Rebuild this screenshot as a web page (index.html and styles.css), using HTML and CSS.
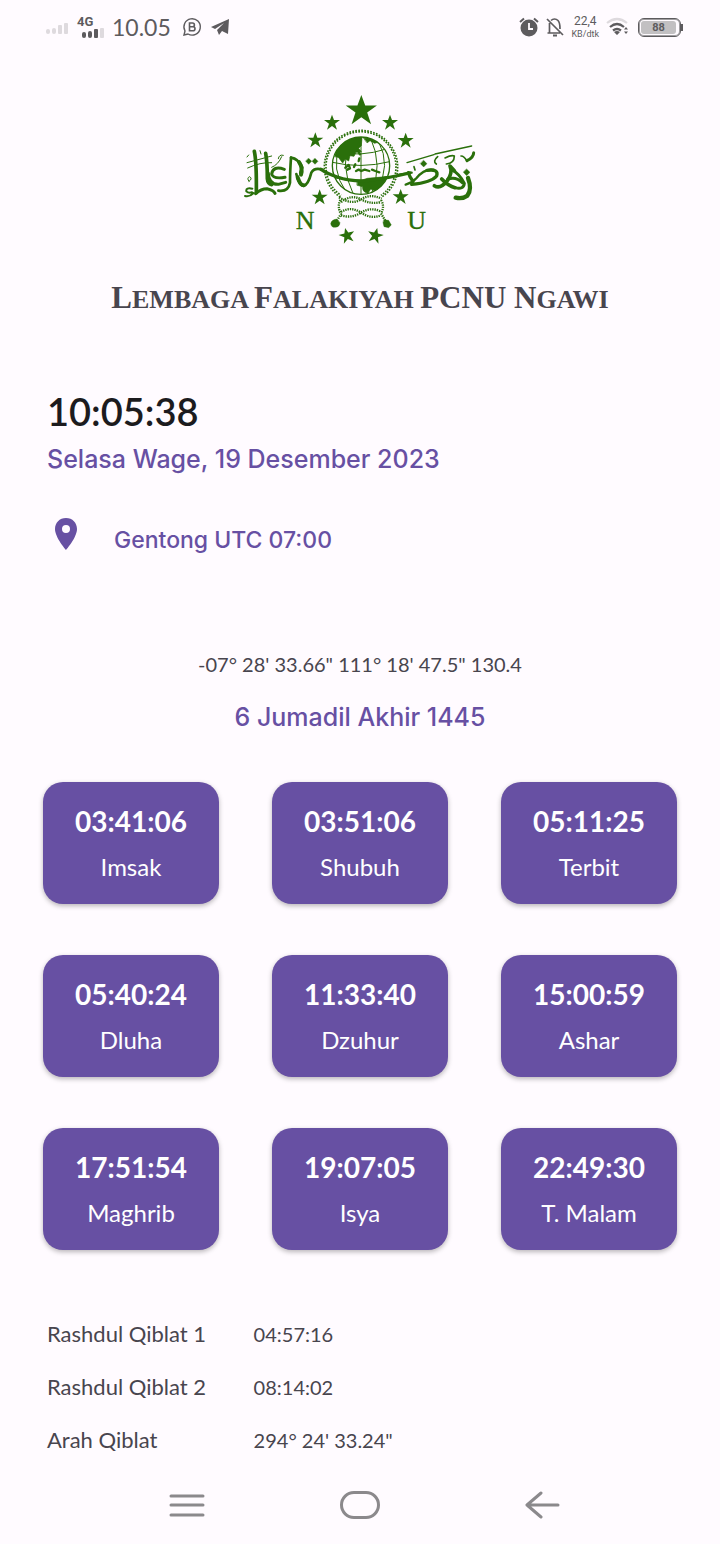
FILE: index.html
```html
<!DOCTYPE html>
<html lang="id">
<head>
<meta charset="utf-8">
<meta name="viewport" content="width=device-width, initial-scale=1">
<title>Lembaga Falakiyah PCNU Ngawi</title>
<link rel="stylesheet" href="styles.css">
</head>
<body>
<div class="screen">
  <header class="status">
    <div class="status-left">
      <svg class="signal" width="24" height="12" viewBox="0 0 24 12" fill="#dedade"><rect x="0" y="6" width="4" height="5" rx="2"/><rect x="6" y="5" width="4" height="6" rx="2"/><rect x="12" y="2" width="4" height="9" rx="1"/><rect x="18" y="0" width="4" height="11" rx="1"/></svg>
      <span class="network">
        <span class="network-type">4G</span>
        <svg width="23" height="10" viewBox="0 0 23 10" fill="#5d5b5e"><rect x="0" y="4" width="4" height="6" rx="2"/><rect x="6" y="3" width="4" height="7" rx="2"/><rect x="12" y="1" width="4" height="9" rx="1"/><rect x="18" y="0" width="4" height="10" rx="1" fill="#dedade"/></svg>
      </span>
      <span class="status-time">10.05</span>
      <svg class="wa" width="20" height="20" viewBox="0 0 20 20" fill="none" stroke="#5d5b5e"><path d="M2 18 3 14A8.200 8.200 0 1 1 6 17z" stroke-width="1.400"/><path d="M7.500 6h3a1.900 1.900 0 0 1 0 3.800h-3zM7.500 9.800h3.500a2 2 0 0 1 0 4h-3.500z" stroke-width="1.600"/></svg>
      <svg width="19" height="17" viewBox="0 0 19 17" fill="#5d5b5e"><path d="M0 8 18 0 17 15 11 12 8 16 6 11 13 4 4 10z"/></svg>
    </div>
    <div class="status-right">
      <svg width="20" height="20" viewBox="0 0 20 20"><circle cx="10" cy="11" r="8.500" fill="#5d5b5e"/><path d="M1 5 5 1.500M19 5 15 1.500" stroke="#5d5b5e" stroke-width="2"/><path d="M10 6v6h4" fill="none" stroke="#fffbff" stroke-width="1.800"/></svg>
      <svg width="18" height="20" viewBox="0 0 18 20" fill="none" stroke="#5d5b5e" stroke-width="1.700"><path d="M1 2 17 18M5 3.500C7 1.500 10 1.500 12 3.500S14 8 14 12M3.500 6v10H14M1.500 16H14"/><path d="M7 18.500h4" stroke-width="2"/></svg>
      <span class="speed"><span>22,4</span><span class="unit">KB/dtk</span></span>
      <svg width="23" height="20" viewBox="0 0 23 20" fill="none" stroke="#5d5b5e" stroke-width="2.200"><path d="M1 6Q11 -2 21 6" stroke="#dedade"/><path d="M4 10Q11 4 18 10M7 13.500Q11 10.500 15 13.500"/><path d="m8 15 3 3 3-3q-3-2-6 0zM18 12.500l2-2.500 2 2.500zM18 14.500l2 2.500 2-2.500z" fill="#5d5b5e" stroke="none"/></svg>
      <span class="battery"><span class="charge">88</span></span>
    </div>
  </header>

  <main class="content">
    <svg class="logo" width="232" height="152" viewBox="30 24 696 456" fill="none" stroke="#2a6f0b" stroke-linecap="round" stroke-linejoin="round" role="img" aria-label="Logo Nahdlatul Ulama">
      <defs>
        <path id="star" d="M0-24 6-8 24-8 9 3 15 21 0 10-15 21-9 3-24-8-6-8z" stroke="none" fill="#2a6f0b"/>
        <clipPath id="globe"><circle cx="381" cy="242" r="86"/></clipPath>
      </defs>
      <use href="#star" transform="translate(382 77) scale(1.950)"/>
      <use href="#star" x="294" y="113"/><use href="#star" x="468" y="113"/>
      <use href="#star" x="244" y="166"/><use href="#star" x="515" y="167"/>
      <use href="#star" x="257" y="337"/><use href="#star" x="500" y="336"/>
      <use href="#star" transform="translate(339 452) rotate(-14)"/><use href="#star" transform="translate(424 452) rotate(14)"/>
      <!-- rope ring -->
      <g stroke-linecap="butt">
        <path d="M319 336Q306 328 296 316A110 110 0 1 1 466 316Q456 328 443 336" stroke-width="5" stroke-dasharray="5 4"/>
        <path d="M321 331Q308 322 300 312A105 105 0 1 1 462 312Q454 322 441 331" stroke-width="5" stroke-dasharray="5 4" stroke-dashoffset="4"/>
      </g>
      <!-- knot and tassels -->
      <g transform="translate(255 315)" stroke-width="7" stroke-linecap="butt" stroke-dasharray="4 3">
        <path d="M60 22Q98 46 126 28T188 26M66 36Q98 12 126 28T186 36M66 66Q96 48 126 68T186 76M66 76Q98 86 126 68T184 64"/>
        <path d="M64 30Q54 50 66 72L52 95M186 30Q198 50 186 70L200 94"/>
      </g>
      <path d="M308 402q-16 2-18 14 2 12 14 11 14-2 14-14zM450 404l14 2 8 14-8 8-14-3-3-12z" fill="#2a6f0b"/>
      <!-- globe -->
      <circle cx="381" cy="242" r="86" stroke-width="4"/>
      <g clip-path="url(#globe)">
        <path d="M295 232q86 20 172-2M307 200q70 18 150-8M300 278q82 22 164-4M381 156v172M350 158q-36 80 8 170M410 160q38 80 2 168M434 170q38 72-4 144M318 184q-30 68 18 136" stroke-width="3"/>
        <path d="M302 214q8-48 78-60l4 4-2 24-8 8 8 10-16 2-6 12-12-2-4 16-10-6-8 12-12-16zM370 290l30-10 68-6q-5 30-36 48l-22-10-8 13q-18-4-16-20l-16-4zM390 160l24-2 20 13-12 4-14-8-8 6z" fill="#2a6f0b" stroke-width="2"/>
        <path d="M334 248l10-8 4 10-8 4M364 238l-4 8M374 228l2-8M366 258l8-4 8 4 10-4 14 4M374 202l4 6M414 254l10 4 12 4" stroke-width="7"/>
      </g>
      <!-- calligraphic band -->
      <path d="M261 253Q280 266 310 276 350 290 400 287 460 280 527 264" stroke-width="10"/>
      <!-- left calligraphy -->
      <g transform="translate(21 171)">
        <path d="M40 28Q47 60 46 152M74 34Q79 60 79 110 80 125 92 128" stroke-width="11"/>
        <path d="M44 155Q60 140 78 140 98 144 102 154M130 82Q96 70 92 96 96 112 132 106M82 94Q84 128 112 127L134 121" stroke-width="9"/>
        <path d="M150 47Q147 90 147 122 142 150 112 146" stroke-width="8"/>
        <path d="M150 47Q172 50 184 76 174 98 180 92M166 96Q174 132 188 132 202 128 211 92 220 76 244 83" stroke-width="8"/>
        <path d="M174 60Q186 78 180 98M170 106Q178 130 188 130" stroke-width="12"/>
        <path d="M18 62 92 42M20 78Q58 60 92 62M92 76Q112 68 122 44M112 50q2-14 15-10M18 45l5-6M57 26l3 10M24 118q-8-10 2-14 10 6-2 14" stroke-width="3"/>
        <path d="M34 140q-20-4-18 8 6 6 17 3M12 162q13 4 26-9" stroke-width="6"/>
        <path d="m203 49 9 9-9 9-9-9zM222 49l9 9-9 9-9-9z" fill="#2a6f0b" stroke-width="1"/>
      </g>
      <!-- right calligraphy -->
      <g transform="translate(495 165)">
        <path d="M0 104 38 98M20 134Q40 128 52 115 76 85 104 90" stroke-width="7"/>
        <path d="M84 91Q120 86 113 108 96 128 38 133M28 98Q32 112 42 124" stroke-width="10"/>
        <path d="M106 137Q124 149 145 122 162 98 153 78L166 92M128 117Q148 138 168 143" stroke-width="11"/>
        <path d="M160 90Q182 102 196 130 194 150 168 143M146 118Q170 108 190 128" stroke-width="9"/>
        <path d="M207 114Q220 148 205 167 190 178 170 173" stroke-width="13"/>
        <path d="M24 68 105 44M108 42 218 18" stroke-width="4"/>
        <path d="M112 72q-12-8 4-22M138 54q20-10 28-6 0 22-24 24M186 48q10 0 18 16M48 90l-3-10" stroke-width="5"/>
        <path d="M204 62q20-10 20-24" stroke-width="9"/>
        <path d="m74 61 10 10-10 10-10-10zM203 87l10 10-10 10-10-10z" fill="#2a6f0b" stroke-width="1"/>
      </g>
      <text class="logo-letter" x="185" y="432">N</text>
      <text class="logo-letter" x="520" y="432">U</text>
    </svg>

    <h1 class="title"><span class="cap">L</span>embaga <span class="cap">F</span>alakiyah <span class="cap">PCNU N</span>gawi</h1>

    <section class="now">
      <time class="clock">10:05:38</time>
      <p class="date">Selasa Wage, 19 Desember 2023</p>
      <p class="place">
        <svg width="24" height="34" viewBox="0 0 24 34"><path d="M12 1C5.500 1 1 5.800 1 12c0 8.500 11 21 11 21s11-12.500 11-21C23 5.800 18.500 1 12 1zm0 7a4 4 0 1 1 0 8 4 4 0 0 1 0-8z" fill="#6750a3" fill-rule="evenodd"/></svg>
        <span class="place-name">Gentong UTC 07:00</span>
      </p>
    </section>

    <section class="position">
      <p class="coords">-07° 28' 33.66" 111° 18' 47.5" 130.4</p>
      <p class="hijri">6 Jumadil Akhir 1445</p>
    </section>

    <section class="times">
      <article class="card"><time class="card-time">03:41:06</time><span>Imsak</span></article>
      <article class="card"><time class="card-time">03:51:06</time><span>Shubuh</span></article>
      <article class="card"><time class="card-time">05:11:25</time><span>Terbit</span></article>
      <article class="card"><time class="card-time">05:40:24</time><span>Dluha</span></article>
      <article class="card"><time class="card-time">11:33:40</time><span>Dzuhur</span></article>
      <article class="card"><time class="card-time">15:00:59</time><span>Ashar</span></article>
      <article class="card"><time class="card-time">17:51:54</time><span>Maghrib</span></article>
      <article class="card"><time class="card-time">19:07:05</time><span>Isya</span></article>
      <article class="card"><time class="card-time">22:49:30</time><span>T. Malam</span></article>
    </section>

    <table class="qibla">
      <tr><th scope="row">Rashdul Qiblat 1</th><td>04:57:16</td></tr>
      <tr><th scope="row">Rashdul Qiblat 2</th><td>08:14:02</td></tr>
      <tr><th scope="row">Arah Qiblat</th><td>294° 24' 33.24"</td></tr>
    </table>
  </main>

  <nav class="navbar">
    <button class="nav-button" aria-label="Menu"><svg width="36" height="28" viewBox="0 0 36 28"><path d="M2 5h32M2 14h32M2 24h32"/></svg></button>
    <button class="nav-button home" aria-label="Beranda"><svg width="42" height="30" viewBox="0 0 42 30"><rect x="2.500" y="2.500" width="37" height="25" rx="12.500"/></svg></button>
    <button class="nav-button" aria-label="Kembali"><svg width="36" height="28" viewBox="0 0 36 28"><path d="M34 14H3M17 2 3 14l14 12"/></svg></button>
  </nav>
</div>
</body>
</html>
```
FILE: styles.css
```css
* { box-sizing: border-box; }

body {
  margin: 0;
  background: #fffbff;
  color: #48454e;
  font-family: Lato, "Open Sans", sans-serif;
}

p, h1 { margin: 0; }
svg { display: block; flex: none; }

.screen {
  display: flex;
  flex-direction: column;
  min-height: 100vh;
}

.status {
  display: flex;
  justify-content: space-between;
  align-items: center;
  height: 54px;
  padding: 0 39px 0 46px;
  color: #5d5b5e;
}

.status-left, .status-right { display: flex; align-items: center; }
.status-left { gap: 7px; }
.status-right { gap: 7px; }
.signal { margin-top: 4px; }

.network {
  display: flex;
  flex-direction: column;
  align-items: flex-end;
  width: 28px;
}

.network-type {
  align-self: flex-start;
  font: bold 13px/12px Roboto, sans-serif;
}

.status-time {
  padding-right: 4px;
  font-size: 23px;
  line-height: 28px;
}

.wa { margin-right: 2px; }

.speed {
  display: flex;
  flex-direction: column;
  align-items: center;
  font: 12px/14px Roboto, sans-serif;
}

.unit { font-size: 9px; line-height: 12px; }

.battery {
  position: relative;
  display: flex;
  width: 43px;
  height: 19px;
  margin-left: 2px;
  padding: 2px;
  border: 1px solid #5d5b5e;
  border-radius: 6px;
  box-shadow: inset 0 0 0 1px #a09ea1;
}

.battery::after {
  content: "";
  position: absolute;
  top: 5px;
  right: -3px;
  width: 2px;
  height: 7px;
  background: #5d5b5e;
}

.charge {
  width: 35px;
  border-radius: 3px;
  background: #c2c0c2;
  font: bold 11px/13px Roboto, sans-serif;
  text-align: center;
}

.content {
  display: flex;
  flex-direction: column;
  flex: 1;
  padding: 39px 43px 0;
}

.logo { align-self: center; }

.logo-letter {
  fill: #2a6f0b;
  stroke: #2a6f0b;
  stroke-width: 1px;
  font: 78px "Liberation Serif", serif;
}

.title {
  margin-top: 33px;
  font: bold 26px/40px "Liberation Serif", serif;
  text-transform: uppercase;
  text-align: center;
}

.cap { font-size: 31px; }

.now { padding: 67px 4px 0; }

.clock {
  display: block;
  color: #1c1b1e;
  font-size: 38px;
  font-weight: 600;
  line-height: 48px;
}

.date, .hijri, .place {
  color: #6750a3;
  font-family: Inter, sans-serif;
  font-weight: 500;
}

.date { margin-top: 8px; font-size: 25px; line-height: 32px; }

.place {
  display: flex;
  align-items: center;
  gap: 36px;
  margin-top: 39px;
  padding-left: 7px;
  font-size: 23px;
  line-height: 28px;
}

.place-name { padding-top: 12px; }

.position { margin-top: 94px; text-align: center; }
.coords { font-size: 20px; line-height: 32px; }
.hijri { margin-top: 21px; font-size: 25px; line-height: 32px; }

.times {
  display: grid;
  grid-template-columns: repeat(3, 1fr);
  gap: 51px 53px;
  margin-top: 49px;
}

.card {
  display: flex;
  flex-direction: column;
  align-items: center;
  gap: 10px;
  padding: 19px 8px 21px;
  border-radius: 20px;
  background: #6750a3;
  box-shadow: 0 2px 5px rgba(0, 0, 0, .28);
  color: #fff;
  font-size: 24px;
  line-height: 32px;
}

.card-time { font-size: 28px; font-weight: 700; line-height: 40px; }

.qibla {
  margin: 57px 4px 0;
  border-collapse: collapse;
  font-size: 22px;
  line-height: 28px;
}

.qibla th, .qibla td {
  height: 53px;
  padding: 0;
  font-weight: 400;
  text-align: left;
}

.qibla th { width: 33%; }
.qibla td { font-size: 20px; }

.navbar {
  display: flex;
  justify-content: space-between;
  align-items: center;
  height: 78px;
  padding: 0 160px 0 169px;
}

.home { margin-right: 10px; }

.nav-button {
  padding: 0;
  border: 0;
  background: none;
}

.nav-button svg {
  fill: none;
  stroke: #8b898c;
  stroke-width: 3;
  stroke-linecap: round;
  stroke-linejoin: round;
}
```
